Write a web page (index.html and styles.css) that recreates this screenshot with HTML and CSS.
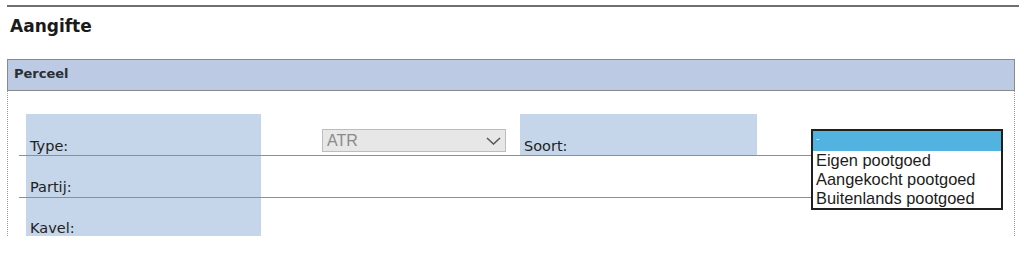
FILE: index.html
```html
<!DOCTYPE html>
<html lang="nl">
<head>
<meta charset="utf-8">
<title>Aangifte</title>
<link rel="stylesheet" href="styles.css">
</head>
<body>
<div class="rule"></div>
<h1 class="title">Aangifte</h1>
<div class="section-head">Perceel</div>
<div class="panel">
  <div class="rows">
    <div class="row row-first">
      <div class="label">Type:</div>
      <div class="select">
        <span class="select-value">ATR</span>
        <svg class="chevron" width="15" height="8" viewBox="0 0 15 8"><path d="M1 1 L7.5 7 L14 1" fill="none" stroke="#5a5a5a" stroke-width="1.6"/></svg>
      </div>
      <div class="label label-soort">Soort:</div>
    </div>
    <div class="row">
      <div class="label">Partij:</div>
    </div>
    <div class="row row-last">
      <div class="label">Kavel:</div>
    </div>
  </div>
  <div class="listbox">
    <div class="option option-selected">-</div>
    <div class="option">Eigen pootgoed</div>
    <div class="option">Aangekocht pootgoed</div>
    <div class="option">Buitenlands pootgoed</div>
  </div>
</div>
</body>
</html>
```

FILE: styles.css
```css
html, body {
  margin: 0;
  padding: 0;
  background: #ffffff;
}
body {
  font-family: "DejaVu Sans", Verdana, sans-serif;
  color: #1f1f1f;
  width: 1024px;
  height: 253px;
  overflow: hidden;
}
.rule {
  margin: 5px 5px 0 7px;
  height: 2px;
  background: #707070;
}
.title {
  margin: 9px 0 0 10px;
  font-size: 17px;
  line-height: 20px;
  font-weight: bold;
  color: #1a1a1a;
}
.section-head {
  margin: 23px 9px 0 7px;
  box-sizing: border-box;
  height: 32px;
  border: 1px solid #8a8a8a;
  background: #bccbe3;
  padding: 6px 6px 0 6px;
  font-size: 13px;
  line-height: 16px;
  font-weight: bold;
  color: #2a2f36;
}
.panel {
  position: relative;
  margin: 0 9px 0 7px;
  height: 145px;
  box-sizing: border-box;
  border-left: 1px dotted #9a9a9a;
  border-right: 1px dotted #9a9a9a;
  padding-top: 23px;
}
.rows {
  margin-left: 11px;
  width: 984px;
  display: flex;
  flex-direction: column;
}
.row {
  display: flex;
  align-items: stretch;
  height: 42px;
  box-sizing: border-box;
  border-bottom: 1px solid #8a9094;
}
.row-last {
  height: 38px;
  border-bottom: none;
}
.label {
  margin-left: 7px;
  width: 235px;
  box-sizing: border-box;
  background: #c5d5ea;
  padding: 0 0 1px 4px;
  display: flex;
  align-items: flex-end;
  font-size: 14.5px;
  line-height: 17px;
  color: #222;
}
.row-first .label {
  padding-bottom: 0;
}
.row-last .label {
  padding-bottom: 0;
  line-height: 15px;
}
.select {
  align-self: flex-start;
  margin: 15px 0 0 61px;
  width: 184px;
  height: 23px;
  box-sizing: border-box;
  border: 1px solid #bdbdbd;
  background: #e7e7e7;
  display: flex;
  align-items: center;
  justify-content: space-between;
  padding: 1px 4px 0 4px;
}
.select-value {
  font-family: "Liberation Sans", Arial, sans-serif;
  font-size: 16px;
  line-height: 18px;
  color: #8a8a8a;
}
.label-soort {
  margin-left: 14px;
  width: 237px;
}
.listbox {
  position: absolute;
  left: 803px;
  top: 38px;
  width: 192px;
  height: 81px;
  box-sizing: border-box;
  border: 2px solid #1f1f1f;
  background: #ffffff;
  font-family: "Liberation Sans", Arial, sans-serif;
  font-size: 16.4px;
  color: #1c1c1c;
}
.option {
  height: 19px;
  line-height: 19px;
  padding-left: 3px;
  white-space: nowrap;
}
.option-selected {
  height: 20px;
  line-height: 16px;
  background: #52b2e0;
  color: #d8eef8;
  font-size: 10px;
}
```
